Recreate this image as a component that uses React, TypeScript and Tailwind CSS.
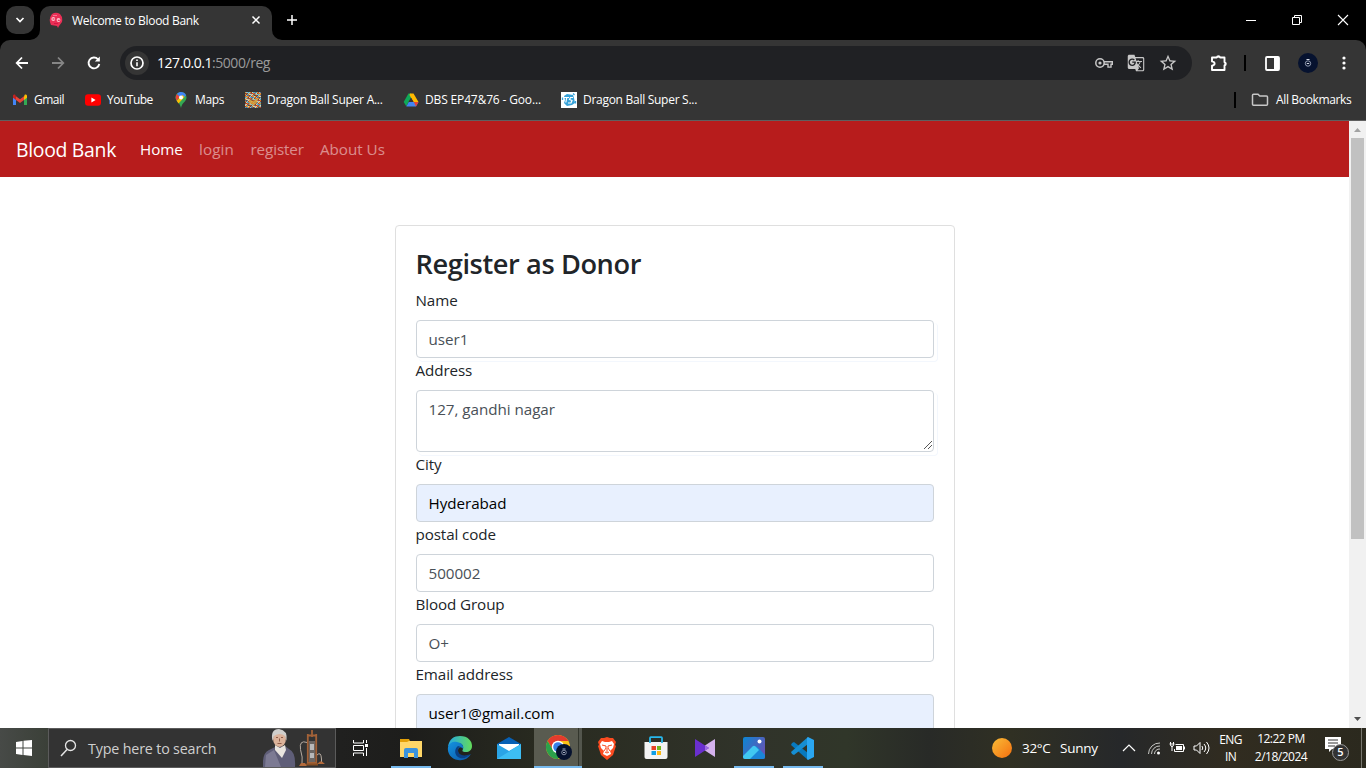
import type { ReactNode } from "react";
import { MdGTranslate, MdStarBorder } from "react-icons/md";

function BloodDropIcon() {
  return (
    <svg width="16" height="16" viewBox="0 0 16 16">
      <path d="M4 2Q8-.5 12 2Q15 5 14 10L11 14L10 16L9 14L3 13Q0 7 4 2Z" fill="#e92f56" />
      <circle cx="5.300" cy="7" r="1.900" fill="#ffc3cf" />
      <circle cx="10.500" cy="8" r="1.900" fill="#ffc3cf" />
      <path d="M4.500 7h2M9.800 8.300h2M6 11.500h4" stroke="#d61644" />
      <path d="M5 3.500h4" stroke="#f87391" />
    </svg>
  );
}

function GmailIcon() {
  return (
    <svg width="16" height="16" viewBox="0 0 16 16">
      <path d="M1 4v9h3V6z" fill="#4285f4" />
      <path d="M12 6v7h3V4z" fill="#34a853" />
      <path d="M12 4.500V8l3-2.200V4c0-1.400-1.400-1.900-2.300-1.200z" fill="#fbbc04" />
      <path d="M4 8V4.300l4 3 4-3V8l-4 3z" fill="#ea4335" />
      <path d="M1 4v1.800L4 8V4.500L3.200 2.800C2.300 2.100 1 2.600 1 4z" fill="#c5221f" />
    </svg>
  );
}

function YouTubeIcon() {
  return (
    <svg width="16" height="16" viewBox="0 0 16 16">
      <rect x="0" y="2.300" width="16" height="11.500" rx="3" fill="#f00" />
      <path d="M6.400 5.600v5l4.200-2.500z" fill="#fff" />
    </svg>
  );
}

function MapsIcon() {
  return (
    <svg width="16" height="16" viewBox="0 0 16 16">
      <path d="M8 0a5.500 5.500 0 0 0-5.500 5.500C2.500 9.500 7 10.500 8 16c1-5.500 5.500-6.500 5.500-10.500A5.500 5.500 0 0 0 8 0z" fill="#34a853" />
      <path d="M4 2l3 2.500-3.300 4.300C2.500 7 2 4 4 2z" fill="#ea4335" />
      <path d="M4 2c2.500-3 7.500-2.500 9 1.300L9.500 7 6 4z" fill="#4285f4" />
      <path d="M3.700 8.800L9.500 3l2 2-6 6.500z" fill="#fbbc04" />
      <circle cx="8" cy="5.500" r="2" fill="#fff" />
    </svg>
  );
}

const MOSAIC = ["#d8943a", "#4ba4c4", "#b8402b", "#e8d09a", "#5b6f8f", "#e07b22", "#8ec1c9", "#77492b"];

function AnimeIcon() {
  return (
    <svg width="16" height="16" viewBox="0 0 16 16">
      {Array.from({ length: 256 }, (_, i) => (
        <rect key={i} x={i % 16} y={Math.floor(i / 16)} width="1" height="1" fill={MOSAIC[(i * 5 + Math.floor(i / 16) * 3 + ((i * i) % 7)) % 8]} />
      ))}
      <path d="M4 7l4 2 5-3-1 5-4 2-4-2z" fill="#d9a03a" opacity=".8" />
    </svg>
  );
}

function DriveIcon() {
  return (
    <svg width="16" height="16" viewBox="0 0 16 16">
      <path d="M5.500 1.500H8L8 5.800 3.300 14.300.7 10z" fill="#0fa958" />
      <path d="M7 1.500h3.500L15.500 10H10.500L6.500 3z" fill="#ffba00" />
      <path d="M3.300 14.500L5.800 10h9.700L13 14.500z" fill="#4285f4" />
      <path d="M10.800 10h4.700L13 14.500z" fill="#ea4335" />
      <path d="M8 5.800L10.500 10h-5z" fill="#353535" />
    </svg>
  );
}

function TsIcon() {
  return (
    <svg width="16" height="16" viewBox="0 0 16 16">
      <path fill="#fff" d="M0 0h16v16H0z" />
      <path d="M3 4l3-2 6 1 1 3 1 5-3 2-5 1-3-3 1-3z" fill="#36a2d9" />
      <path d="M3 5.500h5M5.800 5.500l-1 5M12 5.500H9.500L8.500 7.500l2.500 1-1 2.500H7" stroke="#fff" strokeWidth="1.200" fill="none" />
      <path d="M1.500 8V5.500M14.500 9v2.500M12 1.500l1.500 1.500" stroke="#36a2d9" strokeWidth="1.300" />
    </svg>
  );
}

const BOOKMARKS: { label: string; icon: ReactNode; box: string; text: string }[] = [
  { label: "Gmail", icon: <GmailIcon />, box: "w-[73px]", text: "tracking-[-0.5px]" },
  { label: "YouTube", icon: <YouTubeIcon />, box: "w-[88px]", text: "tracking-[-0.5px]" },
  { label: "Maps", icon: <MapsIcon />, box: "w-[72px]", text: "tracking-[-0.35px]" },
  { label: "Dragon Ball Super A...", icon: <AnimeIcon />, box: "w-[158px]", text: "tracking-[-0.25px]" },
  { label: "DBS EP47&76 - Goo...", icon: <DriveIcon />, box: "w-[158px]", text: "tracking-[-0.15px]" },
  { label: "Dragon Ball Super S...", icon: <TsIcon />, box: "w-[158px]", text: "tracking-[-0.28px]" },
];

function TabStrip() {
  return (
    <div className="flex h-10 bg-black pl-1.5 pt-1.5 text-white">
      <div className="flex size-7 items-center justify-center rounded-[10px] bg-[#353535]">
        <svg width="10" height="10" viewBox="0 0 10 10"><path d="M1.500 3l3.500 3.500L8.500 3" fill="none" stroke="#fff" strokeWidth="1.700" /></svg>
      </div>
      <div className="relative ml-1.5 flex h-[34px] w-[232px] rounded-t-[10px] bg-[#353535] pl-2 pt-1.5">
        <svg className="absolute -left-2.5 bottom-0" width="10" height="10"><path d="M10 0v10H0A10 10 0 0 0 10 0" fill="#353535" /></svg>
        <svg className="absolute -right-2.5 bottom-0" width="10" height="10"><path d="M0 0v10h10A10 10 0 0 1 0 0" fill="#353535" /></svg>
        <BloodDropIcon />
        <span className="ml-2 w-[176px] whitespace-nowrap pt-px text-xs leading-4 tracking-[-0.3px]">Welcome to Blood Bank</span>
        <svg className="mt-[3px] ml-[3px]" width="10" height="10"><path d="M1.500 1.500l7 7m0-7l-7 7" stroke="#fff" strokeWidth="1.500" /></svg>
      </div>
      <svg className="ml-[14px] mt-2" width="12" height="12"><path d="M6 1v10M1 6h10" stroke="#fff" strokeWidth="1.500" /></svg>
      <div className="ml-auto mr-[17px] mt-2 flex">
        <svg width="12" height="12"><path d="M1 6.500h10" stroke="#fff" /></svg>
        <svg className="ml-[34px]" width="12" height="12"><path d="M1.500 3.500h7v7h-7zM3.500 3.500v-2h7v7h-2" fill="none" stroke="#fff" /></svg>
        <svg className="ml-[34px]" width="12" height="12"><path d="M1 1l10 10M11 1L1 11" stroke="#fff" strokeWidth="1.100" /></svg>
      </div>
    </div>
  );
}

function Toolbar() {
  return (
    <div className="bg-black">
      <div className="flex h-10 items-center rounded-t-[10px] bg-[#353535] pt-1.5 text-white">
        <svg className="ml-3.5" width="16" height="16"><path d="M14 8H3M8 2.500L2.700 8 8 13.500" fill="none" stroke="#fff" strokeWidth="1.800" /></svg>
        <svg className="ml-5" width="16" height="16"><path d="M2 8h11M8 2.500L13.300 8 8 13.500" fill="none" stroke="#868686" strokeWidth="1.800" /></svg>
        <svg className="ml-5" width="16" height="16"><path d="M13.300 9A5.400 5.400 0 1 1 12 4.300L13 5.500" fill="none" stroke="#fff" strokeWidth="1.900" /><path d="M13.800 1.500v5h-5z" fill="#fff" /></svg>
        <div className="ml-[18px] flex h-[34px] w-[1072px] items-center rounded-full bg-[#202124] pl-[5px] text-[#c7c7c7]">
          <div className="flex size-6 items-center justify-center rounded-full bg-[#353535] text-white">
            <svg width="16" height="16"><circle cx="8" cy="8" r="6" fill="none" stroke="#fff" strokeWidth="1.700" /><path d="M8 7.200v4M8 4.500v1.500" stroke="#fff" strokeWidth="1.600" /></svg>
          </div>
          <div className="ml-2 whitespace-nowrap text-sm leading-5 tracking-[-0.45px] text-[#9a9a9a]"><span className="text-white">127.0.0.1</span>:5000/reg</div>
          <svg className="ml-auto" width="20" height="14"><circle cx="6" cy="7" r="4.200" fill="none" stroke="#c7c7c7" strokeWidth="1.500" /><circle cx="6" cy="7" r="1.600" fill="#c7c7c7" /><path d="M9.800 5.700h8.500v2.600h-1.300v2.800h-3V8.300H9.800" fill="none" stroke="#c7c7c7" strokeWidth="1.400" /></svg>
          <MdGTranslate className="ml-[13px] size-[18px]" />
          <MdStarBorder className="ml-[13px] mr-[14px] size-5" />
        </div>
        <svg className="ml-[17px]" width="20" height="20"><path d="M3 4.500h4.700a1.800 1.800 0 0 1 3.400 0h4.400v4.700a1.700 1.700 0 0 1 0 3.300V17H3v-4.200q2.600-.4 2.600-2.200T3 8.400z" fill="none" stroke="#fff" strokeWidth="1.900" strokeLinejoin="round" /><path d="M7.700 4.500q1.700-3 3.400 0zM15.500 9q3 1.700 0 3.500z" fill="#fff" /></svg>
        <div className="ml-[15px] h-4 w-0.5 bg-black" />
        <svg className="ml-[19px]" width="15" height="15"><rect x="1" y="1" width="13" height="13" rx="1" fill="none" stroke="#fff" strokeWidth="1.800" /><path d="M9 1h5v13H9z" fill="#fff" /></svg>
        <svg className="ml-[18px]" width="20" height="20"><circle cx="10" cy="10" r="10" fill="#06122f" /><circle cx="10" cy="10.500" r="2.700" fill="none" stroke="#8f99af" /><path d="M8.500 6.500h3M8.800 10.500h2.400" stroke="#d5dae5" fill="none" /></svg>
        <svg className="ml-[24px]" width="4" height="14"><circle cx="2" cy="2" r="1.600" fill="#fff" /><circle cx="2" cy="7" r="1.600" fill="#fff" /><circle cx="2" cy="12" r="1.600" fill="#fff" /></svg>
      </div>
    </div>
  );
}

function BookmarkBar() {
  return (
    <div className="flex h-[41px] items-center border-b border-[#5f5f5f] bg-[#353535] pl-3 text-xs text-white">
      {BOOKMARKS.map((b) => (
        <div key={b.label} className={"flex items-center gap-1.5 whitespace-nowrap " + b.box}>
          <span className="shrink-0">{b.icon}</span>
          <span className={b.text}>{b.label}</span>
        </div>
      ))}
      <div className="ml-auto mr-[15px] h-4 w-0.5 shrink-0 bg-black" />
      <svg className="shrink-0" width="18" height="16"><path d="M1.500 3.200q0-1 1-1H7l1.800 1.900h6.700q1 0 1 1v7.200q0 1-1 1h-13q-1 0-1-1z" fill="none" stroke="#c7c7c7" strokeWidth="1.500" /></svg>
      <span className="ml-[7px] w-[90px] shrink-0 whitespace-nowrap tracking-[-0.35px]">All Bookmarks</span>
    </div>
  );
}

type FieldProps = { label: string; value: string; filled?: boolean; tall?: boolean; edge?: boolean };

function Field({ label, value, filled = false, tall = false, edge = false }: FieldProps) {
  return (
    <div>
      <div className="mb-2 h-6 text-[15.2px] leading-6 tracking-[-0.1px] text-[#212529]">{label}</div>
      <div className={"relative rounded border border-[#ced4da] px-3 py-1.5 text-[15.2px] leading-6 tracking-[-0.03px] " + (filled ? "bg-[#e8f0fe] text-black " : "bg-white text-[#495057] ") + (tall ? "h-[62px]" : "h-[38px]")}>
        {value}
        {edge && <div className="absolute -bottom-[5px] -right-[5px] left-0.5 top-0.5 rounded border-b border-r border-[#f3f7fd]" />}
        {tall && <svg className="absolute bottom-0.5 right-px" width="8" height="8"><path d="M0 8L8 0M4 8l4-4" stroke="#444" strokeWidth=".9" /></svg>}
      </div>
    </div>
  );
}

function Page() {
  return (
    <div className="flex h-[607px] bg-white">
      <div className="flex w-[1349px] flex-col overflow-hidden">
        <nav className="flex h-14 shrink-0 items-center bg-[#b71c1c] pl-4 text-[15.2px] tracking-[-0.02px] text-white/50">
          <span className="w-[124px] pt-px text-[19.4px] tracking-[-0.3px] text-white">Blood Bank</span>
          <span className="w-[59px] text-white">Home</span>
          <span className="w-[51.500px] tracking-[0.12px]">login</span>
          <span className="w-[69.500px] tracking-[-0.1px]">register</span>
          <span className="whitespace-nowrap">About Us</span>
        </nav>
        <div className="mx-auto mt-12 h-[700px] w-[560px] shrink-0 rounded border border-[#dfdfdf] p-5">
          <h1 className="mb-2 h-[34px] whitespace-nowrap pt-px text-[27.2px] font-[560] leading-[34px] tracking-[-0.4px] text-[#212529]">Register as Donor</h1>
          <Field label="Name" value="user1" edge />
          <Field label="Address" value="127, gandhi nagar" tall edge />
          <Field label="City" value="Hyderabad" filled />
          <Field label="postal code" value="500002" />
          <Field label="Blood Group" value="O+" />
          <Field label="Email address" value="user1@gmail.com" filled />
        </div>
      </div>
      <div className="flex w-[17px] flex-col items-center bg-[#f1f1f1]">
        <svg width="17" height="17"><path d="M5 11h7L8.500 7z" fill="#a3a3a3" /></svg>
        <div className="h-[401px] w-[13px] bg-[#c1c1c1]" />
        <svg className="mt-auto" width="17" height="17"><path d="M5 6h7L8.500 10z" fill="#505050" /></svg>
      </div>
    </div>
  );
}

function ExplorerIcon() {
  return (
    <svg width="24" height="24" viewBox="0 0 24 24">
      <path d="M1 3h9l1 2h11v7H1z" fill="#e3a008" />
      <path d="M1 6h7l2-1h13v16H1z" fill="#ffd768" />
      <path d="M5 22v-8q0-2 2-2h10q2 0 2 2v8h-4v-5H9v5z" fill="#3b93dc" />
    </svg>
  );
}

function EdgeIcon() {
  return (
    <svg width="26" height="26" viewBox="0 0 26 26">
      <defs>
        <linearGradient id="edge-top" x1="0" x2="1"><stop stopColor="#25a8e3" /><stop offset="1" stopColor="#63dc5b" /></linearGradient>
        <linearGradient id="edge-side" x1="0" x2="1" y2="1"><stop stopColor="#1493df" /><stop offset="1" stopColor="#0b55a8" /></linearGradient>
      </defs>
      <path d="M1 12C2 4 7 1 13 1c8 0 12 5 12 10 0 4-3 6-6 6-4 0-4-1-3-3 1-4-2-6-5-6-5 0-9 2-10 4z" fill="url(#edge-top)" />
      <path d="M1 12c1-4 5-6 9-5 5 1 7 4 6 7-1-2-5-3-5 2 0 6 8 7 13 3-3 5-8 7-13 6C4 24 0 18 1 12z" fill="url(#edge-side)" />
      <path d="M11 11c-4 3-4 10 2 12 4 1 8-1 10-4-6 3-12 1-12-4 0-2 1-3 3-3z" fill="#0a4085" />
    </svg>
  );
}

function MailIcon() {
  return (
    <svg width="24" height="24" viewBox="0 0 24 24">
      <path d="M0 8L12 1l12 7v3H0z" fill="#0760b5" />
      <path d="M2 8h20v8H2z" fill="#fff" />
      <path d="M0 8l12 7L24 8v15H0z" fill="#2aa4e6" />
      <path d="M0 23L24 8v15z" fill="#3dbdf3" />
    </svg>
  );
}

function ChromeIcon() {
  return (
    <svg width="28" height="28" viewBox="0 0 28 28">
      <circle cx="13" cy="13" r="12" fill="#fbc116" />
      <path d="M2.600 7A12 12 0 0 1 23.400 7H13L8 16z" fill="#e33b2e" />
      <path d="M2.600 7A12 12 0 0 0 13 25l5-9H8z" fill="#2ba14b" />
      <circle cx="13" cy="13" r="6.200" fill="#fff" />
      <circle cx="13" cy="13" r="4.800" fill="#397fe7" />
      <circle cx="19" cy="18" r="8" fill="#06122f" />
      <circle cx="19" cy="18.500" r="2.300" fill="none" stroke="#828ba0" />
      <path d="M17.500 15h3M18 18.500h2" stroke="#a5aec2" fill="none" />
    </svg>
  );
}

function BraveIcon() {
  return (
    <svg width="22" height="25" viewBox="0 0 22 25">
      <path d="M5 2h3l3-1 3 1h3l3 4-1 3 1 1-3 9-6 5-6-5-3-9 1-1-1-3z" fill="#fb4b20" />
      <path d="M6 5l3 1h4l3-1 2 3-1 4-3 3 1 3-4 2-4-2 1-3-3-3-1-4z" fill="#fff" />
      <path d="M6 9l4 1v2l-2 3M16 9l-4 1v2l2 3M9 16l2 1 2-1M11 12v4" stroke="#fb4b20" fill="none" />
    </svg>
  );
}

function StoreIcon() {
  return (
    <svg width="24" height="24" viewBox="0 0 24 24">
      <path d="M.5 6h23v15q0 2-2 2h-19q-2 0-2-2z" fill="#f3f3f3" />
      <path d="M6 7V2q0-.8.8-.8h10.400q.8 0 .8.800v5" stroke="#27b8ec" strokeWidth="1.800" fill="none" />
      <path d="M7.500 10H12v4H7.500z" fill="#e74225" /><path d="M13 10h4v4h-4z" fill="#72b71e" />
      <path d="M7.500 15H12v4H7.500z" fill="#109fe5" /><path d="M13 15h4v4h-4z" fill="#fbb916" />
    </svg>
  );
}

function MediaIcon() {
  return (
    <svg width="24" height="20" viewBox="0 0 24 20">
      <path d="M22 1v18L8 10z" fill="#d4b1ed" />
      <path d="M2 1v18l14-9z" fill="#6a2fcf" />
      <path d="M12 7.500v5l4-2.500z" fill="#9e6ce1" />
    </svg>
  );
}

function PhotosIcon() {
  return (
    <svg width="24" height="24" viewBox="0 0 24 24">
      <defs><linearGradient id="photo-sky" x1="0" x2="1" y2=".6"><stop stopColor="#0b86d4" /><stop offset="1" stopColor="#6455b4" /></linearGradient></defs>
      <rect x="1" y="1" width="22" height="22" rx="2" fill="url(#photo-sky)" />
      <path d="M12.500 11q1.500-1.500 3 0l7.500 8v2q0 2-2 2H6z" fill="#1a86d8" />
      <path d="M1 20L10.500 10.500q1.500-1.500 3 0l3.500 3.500L8 23H3q-2 0-2-2z" fill="#40c8f2" />
      <circle cx="17.500" cy="5.500" r="2" fill="#fff" />
    </svg>
  );
}

function CodeIcon() {
  return (
    <svg width="25" height="25" viewBox="0 0 25 25">
      <path d="M2 7l2-1 14 11v7L1 9z" fill="#0879be" />
      <path d="M1 16L18 1v7L4 19l-2-1z" fill="#168ed2" />
      <path d="M18 1l6 3v17l-6 3-1-1V2z" fill="#2aa7f2" />
    </svg>
  );
}

const APPS: { name: string; icon: ReactNode; open?: boolean }[] = [
  { name: "explorer", icon: <ExplorerIcon />, open: true },
  { name: "edge", icon: <EdgeIcon /> },
  { name: "mail", icon: <MailIcon /> },
  { name: "chrome", icon: <ChromeIcon /> },
  { name: "brave", icon: <BraveIcon /> },
  { name: "store", icon: <StoreIcon /> },
  { name: "media", icon: <MediaIcon /> },
  { name: "photos", icon: <PhotosIcon />, open: true },
  { name: "code", icon: <CodeIcon />, open: true },
];

function SearchArt() {
  return (
    <svg width="64" height="38" viewBox="0 0 64 38">
      <path d="M0 38Q-1 24 6 21l6-3 10-1 4 3q7 3 6 18z" fill="#5f5e78" />
      <path d="M3 26l8-5 7 17H2z" fill="#7c7a93" />
      <path d="M12 16l5 3 5-3 1 5-4 8-7-8z" fill="#e9e5df" />
      <ellipse cx="16.500" cy="9.500" rx="6.500" ry="8.500" fill="#dbb29a" />
      <path d="M9.500 12Q7 0 16 0q9 1 7.500 12l-1.500-5q-5-4-11 0z" fill="#cfcecb" />
      <path d="M13 8.500h2m3 0h2M16.500 9.500v3M14.500 14.500h4" stroke="#87533f" strokeWidth=".9" fill="none" />
      <path d="M46 12h6v22h-6z" fill="#6b6663" />
      <path d="M47 15h4v6h-4zM47 24h4v5h-4z" fill="#b9b9b9" />
      <path d="M44 6.500h10M44 34h10M44.800 5v29m8.400-29v29M49 1v7" stroke="#a36238" strokeWidth="1.800" />
      <path d="M44 13.500q-8-3-6.500 7 2.500 8 1.500 14M54 26q4-4 4.500 4v4" stroke="#b5aaa0" fill="none" />
      <path d="M36 37l2-3h4l2 3zM54 35l3-2.500h2l3 2.500z" fill="#b46b3c" />
      <path d="M43 34.500h12v2H43z" fill="#895025" />
    </svg>
  );
}

function Taskbar() {
  return (
    <div className="flex h-10 bg-[linear-gradient(90deg,#474a47_0%,#3b4038_3.5%,#20201f_25%,#1d1d1b_30%,#292b20_40%,#30332a_55%,#303629_62%,#282a27_68%,#303023_74%,#26282a_82%,#312c20_90%,#2b291e_100%)] text-white">
      <div className="flex w-12 items-center justify-center">
        <svg width="16" height="16"><path d="M0 2l6.500-1v6.500H0zM7.500.8L16 0v7.500H7.500zM0 8.500h6.500V15L0 14zM7.500 8.500H16V16l-8.500-1z" fill="#fff" /></svg>
      </div>
      <div className="flex w-72 items-center border border-[#5b5b5b] bg-[#333]">
        <svg className="ml-[11px]" width="17" height="18"><circle cx="10.500" cy="6.500" r="5" fill="none" stroke="#e5e5e5" strokeWidth="1.300" /><path d="M7 10.500L1 17" stroke="#e5e5e5" strokeWidth="1.500" /></svg>
        <span className="ml-[11px] w-[175px] whitespace-nowrap pt-0.5 text-[14.3px] leading-5 tracking-[-0.17px] text-[#cfcfcf]">Type here to search</span>
        <SearchArt />
      </div>
      <div className="mr-0.5 flex w-12 items-center justify-center">
        <svg width="17" height="16"><path d="M1.500 0v3h10V0M1.500 16v-3h10v3M1.500 5.500h10v5h-10zM14.500 0v3M14.500 8v8" fill="none" stroke="#fff" /><path d="M13 4h3v3h-3z" fill="#fff" /></svg>
      </div>
      {APPS.map((a) =>
        a.name === "chrome" ? (
          <div key={a.name} className="relative ml-px flex w-12 items-center justify-center border-r-3 border-[#53564d] bg-[#595b50] pl-[5px]">
            {a.icon}
            <div className="absolute bottom-0 right-0 top-0 w-px bg-[#33362d]" />
            <div className="absolute -right-[3px] bottom-0 left-0 h-0.5 bg-[#76b9ed]" />
          </div>
        ) : (
          <div key={a.name} className="relative flex w-[49px] items-center justify-center">
            {a.icon}
            {a.open && <div className="absolute bottom-0 left-[5px] h-0.5 w-10 bg-[#76b9ed]" />}
          </div>
        ),
      )}
      <div className="ml-auto flex w-[374px] items-center whitespace-nowrap">
        <div className="size-5 shrink-0 rounded-full bg-linear-to-br from-[#f8bc36] to-[#f36d0b]" />
        <span className="ml-2.5 w-[38px] shrink-0 text-[13.5px] tracking-[-0.3px]">32°C</span>
        <span className="w-[62px] shrink-0 text-[13.5px] tracking-[-0.25px]">Sunny</span>
        <svg className="shrink-0" width="14" height="8"><path d="M1 7l6-6 6 6" stroke="#fff" strokeWidth="1.200" fill="none" /></svg>
        <svg className="ml-[11px] shrink-0" width="14" height="14"><g fill="none" stroke="#c8c8c5"><path d="M1.500 13A11 11 0 0 1 13 2M4.500 13A8 8 0 0 1 13 5M7.500 13A5 5 0 0 1 13 8" /></g><circle cx="11.500" cy="12" r="1.500" fill="#fff" /></svg>
        <svg className="ml-2 shrink-0" width="17" height="14"><path d="M6.500 3.500h8v7h-9V8M15.500 5.500v3" fill="none" stroke="#fff" /><path d="M7 5h6v4H7z" fill="#fff" /><path d="M1.500 1v2.500q0 2 1.500 2t1.500-2V1M.5 3h5M3 5v5" fill="none" stroke="#fff" /></svg>
        <svg className="ml-[7px] shrink-0" width="18" height="14"><path d="M1 5h2.500L7 1.500v11L3.500 9H1zM9 5q1.500 2 0 4M11 3q3.500 4 0 8M13.500 1q5 6 0 12" fill="none" stroke="#fff" /></svg>
        <div className="ml-[6px] w-[27px] shrink-0 text-center text-xs leading-[17px] tracking-[-0.6px]">ENG<br />IN</div>
        <div className="ml-[10px] w-[54px] shrink-0 text-center text-xs leading-[18px] tracking-[-0.5px]">12:22 PM<br />2/18/2024</div>
        <div className="relative ml-[17px] h-6 w-6 shrink-0">
          <svg width="17" height="17" viewBox="0 0 17 17"><path d="M0 1h16v12H7l-3 3v-3H0z" fill="#fff" /><path d="M3 4h10M3 7h10M3 10h7" stroke="#333" /></svg>
          <div className="absolute left-[7px] top-2 flex size-[17px] items-center justify-center rounded-full border border-[#999] bg-[#333] text-[11px] font-semibold">5</div>
        </div>
        <div className="ml-3 h-10 w-px shrink-0 bg-[#77766e]" />
      </div>
    </div>
  );
}

export default function App() {
  return (
    <div className="h-[768px] w-[1366px] overflow-hidden font-['Open_Sans','Noto_Sans',sans-serif]">
      <TabStrip />
      <Toolbar />
      <BookmarkBar />
      <Page />
      <Taskbar />
    </div>
  );
}
